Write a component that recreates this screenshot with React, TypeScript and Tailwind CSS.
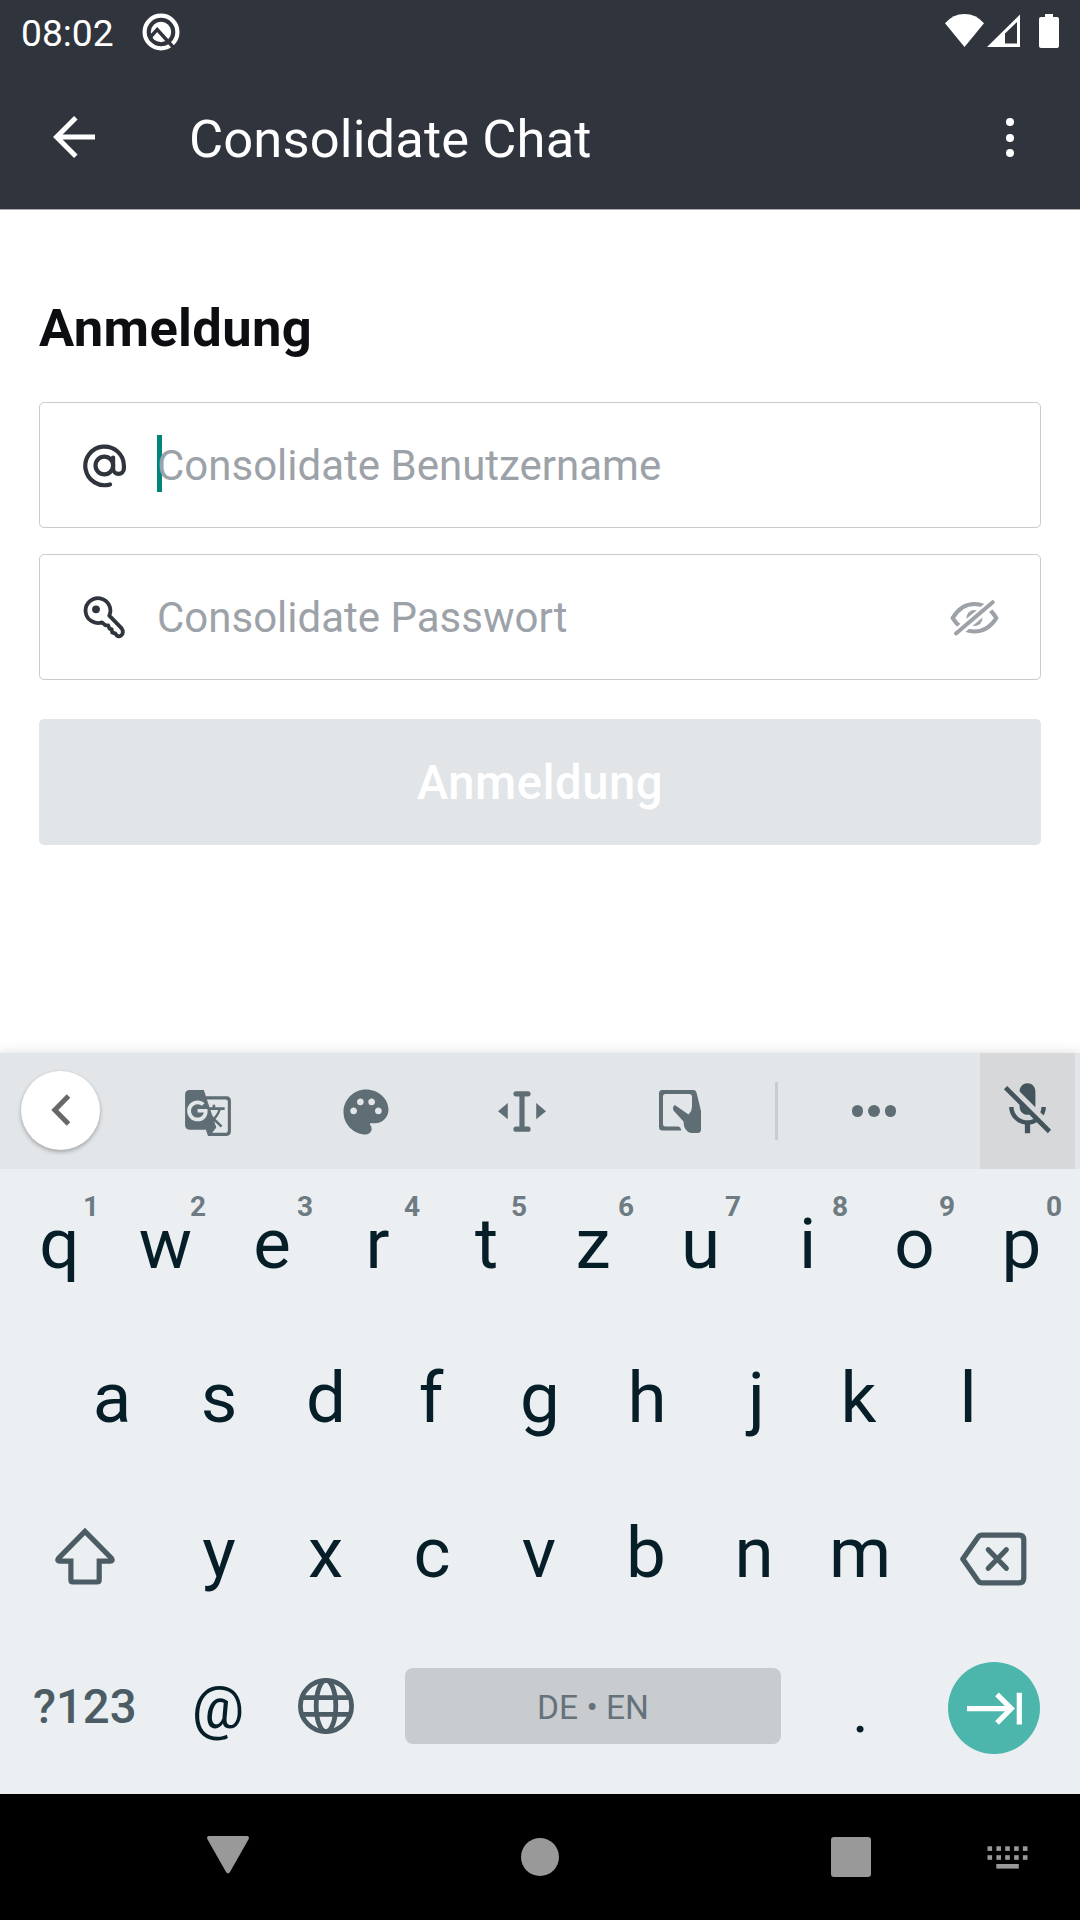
import React from "react";
import { MdGTranslate, MdMicOff, MdPalette } from "react-icons/md";

function StatusBar() {
  return (
    <div className="flex h-[66px] items-center pl-[21px] pr-[21px] text-white">
      <span className="w-[121px] text-[37.2px] leading-[66px]">08:02</span>
      <svg className="mb-[3px] h-[38px] w-[38px]" viewBox="0 0 38 38" fill="none">
        <circle cx="19" cy="19" r="16.4" stroke="#fff" strokeWidth="4.2" />
        <circle cx="19" cy="19" r="10.2" fill="#fff" />
        <path d="M8 24.5L15.2 16.5L32 35" stroke="#2f343d" strokeWidth="3.4" />
      </svg>
      <div className="ml-auto mb-1 flex h-[36px]">
        <svg className="h-[36px] w-[114px]" viewBox="945 13 114 36" fill="#fff">
          <path d="M964.5 47L945 23.3Q953 14 964.5 14T984 23.3Z" />
          <path fillRule="evenodd" d="M987 47L1020 14.5V47ZM1005 33.5V43.5H1017V22Z" />
          <path d="M1045 14h8v3h4a2 2 0 0 1 2 2v27a2 2 0 0 1-2 2h-16a2 2 0 0 1-2-2v-27a2 2 0 0 1 2-2h4Z" />
        </svg>
      </div>
    </div>
  );
}

function AppBar() {
  return (
    <div className="flex h-[143px] items-center pl-[53px] pr-[66px] text-white">
      <svg className="mb-[2px] h-[42px] w-[42px]" viewBox="0 0 42 42" fill="none" stroke="#fff" strokeWidth="5">
        <path d="M42 21H4M22.8 1.8L3.6 21l19.2 19.2" />
      </svg>
      <h1 className="ml-[94px] mt-[2px] text-[52.5px] leading-[64px] tracking-[0.12px]">Consolidate Chat</h1>
      <div className="ml-auto flex w-2 flex-col gap-[7.3px]">
        <i className="size-2 rounded-full bg-white" />
        <i className="size-2 rounded-full bg-white" />
        <i className="size-2 rounded-full bg-white" />
      </div>
    </div>
  );
}

function AtIcon() {
  return (
    <svg className="h-[44px] w-[44px]" viewBox="83 444 44 44" fill="none" stroke="#2f343d" strokeWidth="4.2" strokeLinecap="round">
      <path d="M110 484.4A19.3 19.3 0 1 1 123.9 465.8V468.5A5.4 5.4 0 0 1 113.1 468.5V457.5" />
      <circle cx="104.3" cy="465.5" r="8.8" />
    </svg>
  );
}

function KeyIcon() {
  return (
    <svg className="h-[44px] w-[44px]" viewBox="83 596 44 44" fill="none" stroke="#2f343d" strokeWidth="3.8" strokeLinejoin="round">
      <path d="M109.3 615.6A12.4 12.4 0 1 0 102 622.3L105.5 625.4H108.2L109.5 628.6L111.7 629.4L112.2 632.4L115.4 633.6Q117.5 637.6 121 635.6Q124.4 632.8 121.7 628.4Z" />
      <circle cx="96" cy="609.3" r="3.9" fill="#2f343d" stroke="none" />
    </svg>
  );
}

function EyeOffIcon() {
  return (
    <svg className="h-[36px] w-[50px]" viewBox="949 600 50 36" fill="none" stroke="#9ca2a8" strokeWidth="4.2">
      <path d="M952.6 618Q961 604 974.5 604T996.4 618Q988 631.5 974.5 631.5T952.6 618Z" strokeLinejoin="round" />
      <circle cx="974.5" cy="618" r="8" fill="#9ca2a8" stroke="none" />
      <path d="M952 637L998 598.5" stroke="#fff" strokeWidth="9.4" />
      <path d="M956 633.5L992.7 602.2" strokeLinecap="round" strokeWidth="4" />
    </svg>
  );
}

function LoginForm() {
  return (
    <main className="flex h-[844px] flex-col border-t border-[#a6a8ac] bg-white px-[39px] pt-[86px]">
      <h2 className="text-[52.5px] font-bold leading-[64px] tracking-[0.35px] text-[#0d0e12]">Anmeldung</h2>
      <div className="mt-[42px] flex h-[126px] items-center rounded-[5px] border border-[#cbcbcc] pl-[43px] pt-[2px]">
        <AtIcon />
        <div className="relative ml-[30px] flex h-[57px] items-center">
          <span className="absolute left-0 top-[-3px] h-[57px] w-[5px] bg-[#008577]" />
          <span className="relative text-[42px] leading-[50px] text-[#9ca2a8]">Consolidate Benutzername</span>
        </div>
      </div>
      <div className="mt-[26px] flex h-[126px] items-center rounded-[5px] border border-[#cbcbcc] pl-[43px] pr-[41px] pt-[2px]">
        <KeyIcon />
        <span className="ml-[30px] text-[42px] leading-[50px] text-[#9ca2a8]">Consolidate Passwort</span>
        <span className="ml-auto">
          <EyeOffIcon />
        </span>
      </div>
      <button className="mt-[39px] h-[126px] rounded-[5px] bg-[#e1e5e8] pt-[2px] text-[47.25px] font-medium tracking-[0.5px] text-white">
        Anmeldung
      </button>
    </main>
  );
}

function Toolbar() {
  return (
    <div className="flex h-[116px] items-center bg-[#e3e6e9] text-[#5f6e75]">
      <div className="mb-[2px] ml-[21px] flex size-[79px] items-center justify-center rounded-full bg-white shadow-[0_2px_4px_rgba(0,0,0,0.3)]">
        <svg className="h-[32px] w-[20px]" viewBox="0 0 20 32" fill="none" stroke="#696867" strokeWidth="5">
          <path d="M17.5 2L3.8 16L17.5 30" />
        </svg>
      </div>
      <MdGTranslate className="ml-[83px] mt-[3px] size-[50px]" />
      <MdPalette className="ml-[106px] mt-px size-[54px]" />
      <svg className="ml-[105px] h-[42px] w-[48px] mt-[2px]" viewBox="498 1091 48 42" fill="currentColor">
        <path d="M498 1111.2L507.8 1103V1119.2ZM546 1111.2L536.2 1103V1119.2Z" />
        <path d="M516 1093.8H528M516 1129.2H528M522 1094V1129" stroke="currentColor" strokeWidth="5.2" strokeLinecap="round" fill="none" />
      </svg>
      <svg className="ml-[113px] mt-[2px] h-[44px] w-[42px]" viewBox="659 1090 42 44" fill="currentColor">
        <path d="M662 1090H693.5Q696 1090 696.5 1092.5L701 1111V1129.5Q701 1133 697.5 1133H691Q683.5 1131 683.5 1121.5L673.7 1110.8Q671.8 1107.5 674.8 1105L688.5 1114.6Q692 1111 692 1107V1097Q692 1094 689 1094H665.5Q663 1094 663 1096.5V1124Q663 1126.5 665.5 1126.5H678.5Q681 1127.2 681.3 1130.5H662.5Q659 1130.5 659 1127V1093.5Q659 1090 662 1090Z" />
      </svg>
      <div className="ml-[74px] h-[58px] w-[3px] bg-[#c9cdd0]" />
      <div className="ml-[74px] flex gap-[5px]">
        <i className="size-[11.4px] rounded-full bg-[#5f6e75]" />
        <i className="size-[11.4px] rounded-full bg-[#5f6e75]" />
        <i className="size-[11.4px] rounded-full bg-[#5f6e75]" />
      </div>
      <div className="ml-auto mr-[5px] flex h-full w-[95px] items-center justify-center bg-[#d7d8da]">
        <MdMicOff className="mb-[3px] size-[63px] text-[#44545c]" />
      </div>
    </div>
  );
}

/* Optical centring for glyphs with uneven side bearings. */
const nudge: Record<string, string> = {
  r: "pr-1",
  f: "pr-1",
  k: "pr-[5px]",
  j: "pl-[5px]",
  c: "pr-[2px]",
  q: "pl-[2px]",
  e: "pr-px",
  z: "pr-px",
  x: "pr-px",
  v: "pr-[2px]",
  m: "pr-[2px]",
  b: "pr-[2px]",
};

function Key({ label, hint }: { label: string; hint?: string }) {
  return (
    <div className={`relative flex h-full w-[107px] items-center justify-center text-[70.9px] leading-[84px] text-[#051e28] ${nudge[label] ?? ""}`}>
      {label}
      {hint && (
        <span className="absolute right-[13px] top-[22px] text-[28px] font-bold leading-[32px] text-[#6f7b82]">{hint}</span>
      )}
    </div>
  );
}

function Keyboard() {
  return (
    <section className="flex h-[741px] flex-col bg-[#ebeff2] shadow-[0_0_12px_rgba(0,0,0,0.14)]">
      <Toolbar />
      <div className="flex h-[149px] px-[5px]">
        {"qwertzuiop".split("").map((c, i) => (
          <Key key={c} label={c} hint={"1234567890"[i]} />
        ))}
      </div>
      <div className="flex h-[159px] justify-center">
        {"asdfghjkl".split("").map((c) => (
          <Key key={c} label={c} />
        ))}
      </div>
      <div className="flex h-[151px] items-center px-[5px]">
        <div className="flex w-[160.5px] justify-center">
          <svg className="mt-[6px] h-[60px] w-[60px]" viewBox="55 1525 60 60" fill="none" stroke="#4c5c64" strokeWidth="5.2">
            <path d="M85 1530.4L58.6 1557.2Q56.5 1560.2 60 1560.2H70.9V1579Q70.9 1581 72.9 1581H97Q99.2 1581 99.2 1579V1560.2H110Q113.5 1560.2 111.4 1557.2Z" />
          </svg>
        </div>
        {"yxcvbnm".split("").map((c) => (
          <Key key={c} label={c} />
        ))}
        <div className="flex w-[160.5px] justify-center pr-[2px]">
          <svg className="mt-[12px] h-[54px] w-[68px]" viewBox="960 1531.5 68 54" fill="none" stroke="#4c5c64" strokeWidth="5.2">
            <path d="M962.8 1558.5L978 1536.8Q979.5 1534.7 982 1534.7H1019Q1023.8 1534.7 1023.8 1539.5V1577.5Q1023.8 1582.3 1019 1582.3H982Q979.5 1582.3 978 1580.2Z" strokeLinejoin="round" />
            <path d="M988.3 1549.2L1006.3 1567.8M1006.3 1549.2L988.3 1567.8" strokeLinecap="round" />
          </svg>
        </div>
      </div>
      <div className="flex h-[156px] items-center pl-[5px]">
        <div className="w-[160.5px] pr-px pt-[2px] text-center text-[47.3px] font-medium leading-[56px] text-[#4c5c64]">?123</div>
        <div className="w-[107px] pr-[2px] pt-[3px] text-center text-[58.5px] leading-[66px] text-[#051e28]">@</div>
        <div className="flex w-[107px] justify-center pr-px">
          <svg className="h-[56px] w-[56px]" viewBox="0 0 56 56" fill="none" stroke="#4c5c64" strokeWidth="4.8">
            <circle cx="28" cy="28" r="25.6" />
            <ellipse cx="28" cy="28" rx="9.8" ry="25.6" />
            <path d="M4 19.6H52M4 36.4H52" />
          </svg>
        </div>
        <div className="ml-[25.5px] h-[76px] w-[376px] rounded-[8px] bg-[#c8ccce] text-center text-[33.5px] leading-[79px] text-[#65727a]">
          DE • EN
        </div>
        <div className="ml-[26px] flex w-[107px] justify-center text-[62px] leading-[66px] text-[#051e28]">
          <span className="mt-[9px]">.</span>
        </div>
        <div className="ml-[34px] mt-1 flex size-[92px] items-center justify-center rounded-full bg-[#4db6ac]">
          <svg className="ml-px mt-px h-[34px] w-[56px]" viewBox="967 1692 56 34" fill="none" stroke="#fff" strokeWidth="5.2">
            <path d="M967 1708.6H1009M997 1694.4L1011.2 1708.6L997 1722.8M1019.3 1692.7V1724.5" />
          </svg>
        </div>
      </div>
    </section>
  );
}

function NavBar() {
  return (
    <nav className="flex h-[126px] items-start bg-black pl-[207px]">
      <svg className="mt-[42px] h-[38px] w-[42px]" viewBox="0 0 42 38" fill="#999">
        <path d="M1.8 0H40.2Q42.6 .4 41.7 3L23 36Q21 38.8 19 36L.3 3Q-.6 .4 1.8 0Z" />
      </svg>
      <i className="ml-[272px] mt-[44px] size-[38px] rounded-full bg-[#999]" />
      <i className="ml-[272px] mt-[43px] size-[40px] rounded-[3px] bg-[#999]" />
      <svg className="ml-[116px] mt-[52px] h-[23px] w-[42px]" viewBox="0 0 42 23" fill="#999">
        {[0.5, 9.4, 18.2, 27.1, 35.9].map((x) => (
          <g key={x}>
            <rect x={x} y="0.3" width="4.6" height="4.6" />
            <rect x={x} y="9.2" width="4.6" height="4.6" />
          </g>
        ))}
        <rect x="9.3" y="18" width="22.5" height="4.6" />
      </svg>
    </nav>
  );
}

export default function App() {
  return (
    <div className="flex h-[1920px] w-[1080px] flex-col overflow-hidden font-[Roboto,sans-serif]">
      <header className="h-[209px] bg-[#2f343d]">
        <StatusBar />
        <AppBar />
      </header>
      <LoginForm />
      <Keyboard />
      <NavBar />
    </div>
  );
}
